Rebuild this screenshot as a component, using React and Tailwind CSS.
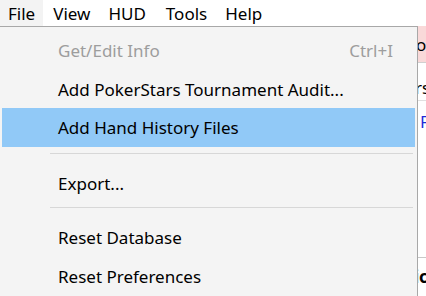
import React from "react";

const menuBar = [
  { label: "File", open: true, gap: "mr-[2px]" },
  { label: "View", gap: "mr-[2px]" },
  { label: "HUD", gap: "mr-[4px]" },
  { label: "Tools", gap: "mr-[2px]" },
  { label: "Help", gap: "mr-[2px]" },
];

// dropdown entries, "sep" draws a divider
const fileMenu = [
  { label: "Get/Edit Info", shortcut: "Ctrl+I", disabled: true, h: "h-[39px]" },
  { label: "Add PokerStars Tournament Audit...", h: "h-[38px]" },
  { label: "Add Hand History Files", active: true, h: "h-[39px]" },
  { sep: true, h: "h-[17px]", pad: "pt-[6px]" },
  { label: "Export...", h: "h-[38px]" },
  { sep: true, h: "h-[16px]", pad: "pt-[5px]" },
  { label: "Reset Database", h: "h-[39px]" },
  { label: "Reset Preferences", h: "h-[38px]" },
];

const MenuRow = ({ item }) => {
  if (item.sep) {
    return (
      <div className={`${item.h} ${item.pad} pl-[48px] pr-[2px]`}>
        <div className="h-px bg-[#d7d7d7]" />
      </div>
    );
  }
  return (
    <div
      className={`${item.h} flex items-center pl-[56px] pr-[22px] ${
        item.active ? "bg-[#91c9f7]" : ""
      } ${item.disabled ? "text-[#9d9d9d]" : "text-black"}`}
    >
      <span className="flex-1 whitespace-nowrap">{item.label}</span>
      {item.shortcut && <span className="whitespace-nowrap">{item.shortcut}</span>}
    </div>
  );
};

export default function App() {
  return (
    <div
      className="w-[426px] h-[296px] overflow-hidden bg-white text-[17px] leading-none"
      style={{ fontFamily: '"Noto Sans", "Open Sans", sans-serif' }}
    >
      {/* menu bar */}
      <div className="h-[26px] flex items-stretch bg-white">
        {menuBar.map((m) => (
          <div
            key={m.label}
            className={`flex items-center px-[8px] ${m.gap} text-black ${m.open ? "bg-[#f3f3f3]" : ""}`}
          >
            {m.label}
          </div>
        ))}
      </div>

      <div className="flex h-[270px]">
        {/* open File dropdown */}
        <div className="w-[418px] shrink-0 bg-[#f4f4f4] border-t border-r border-[#a8a8a8] pt-[4px] px-[2px]">
          {fileMenu.map((item, i) => (
            <MenuRow key={i} item={item} />
          ))}
        </div>

        {/* what shows of the window behind the menu */}
        <div className="flex-1 overflow-hidden flex flex-col text-[17px]">
          <div className="h-[37px] bg-[#f9d9d9] flex items-center border-b border-[#d0d0d0]">
            <span className="ml-[-2px] whitespace-nowrap text-black">or</span>
          </div>
          <div className="h-[34px] flex items-end pb-[4px] border-b border-[#e0e0e0] mt-[4px]">
            <span className="ml-[-3px] whitespace-nowrap text-black">rs</span>
          </div>
          <div className="h-[40px] flex items-center">
            <span className="ml-[2px] whitespace-nowrap text-[#1f2bd8]">F</span>
          </div>
          <div className="h-[117px] border-b border-[#c8c8c8]" />
          <div className="h-[36px] flex items-center">
            <span className="ml-[-4px] whitespace-nowrap text-black font-bold">ic</span>
          </div>
        </div>
      </div>
    </div>
  );
}
